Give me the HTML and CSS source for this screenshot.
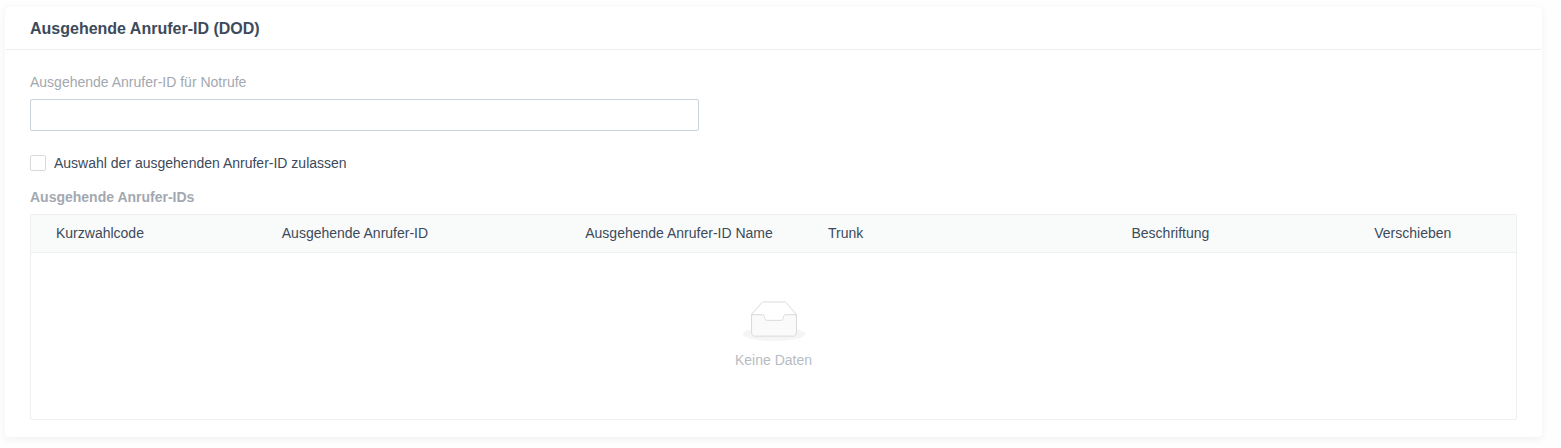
FILE: index.html
```html
<!DOCTYPE html>
<html lang="de">
<head>
    <meta charset="UTF-8">
    <meta name="viewport" content="width=device-width, initial-scale=1.0">
    <title>Ausgehende Anrufer-ID (DOD)</title>
    <link rel="stylesheet" href="styles.css">
</head>
<body>
    <section class="card">
        <h2 class="card-title">Ausgehende Anrufer-ID (DOD)</h2>

        <form class="card-body">
            <label class="field-label" for="emergency-id">Ausgehende Anrufer-ID für Notrufe</label>
            <input class="field-input" type="text" id="emergency-id">

            <div class="check-row">
                <input class="checkbox" type="checkbox" id="allow-select">
                <label for="allow-select">Auswahl der ausgehenden Anrufer-ID zulassen</label>
            </div>

            <h3 class="table-title">Ausgehende Anrufer-IDs</h3>

            <div class="table-wrap">
                <table class="id-table">
                    <colgroup>
                        <col class="col-m">
                        <col class="col-l">
                        <col class="col-m">
                        <col class="col-l">
                        <col class="col-m">
                        <col class="col-s">
                    </colgroup>
                    <thead>
                        <tr>
                            <th>Kurzwahlcode</th>
                            <th>Ausgehende Anrufer-ID</th>
                            <th>Ausgehende Anrufer-ID Name</th>
                            <th>Trunk</th>
                            <th>Beschriftung</th>
                            <th>Verschieben</th>
                        </tr>
                    </thead>
                    <tbody>
                        <tr>
                            <td class="empty" colspan="6">
                                <svg class="empty-icon" width="64" height="40" viewBox="0 0 64 41" aria-hidden="true">
                                    <g transform="translate(0 1)" fill="none" fill-rule="evenodd">
                                        <ellipse fill="#f5f5f5" cx="32" cy="33" rx="32" ry="7"/>
                                        <g fill-rule="nonzero" stroke="#d9d9d9">
                                            <path d="M55 12.76L44.854 1.258C44.367.474 43.656 0 42.907 0H21.093c-.749 0-1.46.474-1.947 1.257L9 12.761V22h46v-9.24z"/>
                                            <path d="M41.613 15.931c0-1.605.994-2.93 2.227-2.931H55v18.137C55 33.26 53.68 35 52.05 35h-40.1C10.32 35 9 33.259 9 31.137V13h11.16c1.233 0 2.227 1.323 2.227 2.928v.022c0 1.605 1.005 2.901 2.237 2.901h14.752c1.232 0 2.237-1.308 2.237-2.913v-.007z" fill="#fafafa"/>
                                        </g>
                                    </g>
                                </svg>
                                <p class="empty-text">Keine Daten</p>
                            </td>
                        </tr>
                    </tbody>
                </table>
            </div>
        </form>
    </section>
</body>
</html>
```
FILE: styles.css
```css
* {
    box-sizing: border-box;
}

body {
    margin: 0;
    padding: 7px 19px 11px 5px;
    background-color: #fefefe;
    color: #3c4a5b;
    font-family: "Liberation Sans", Arial, sans-serif;
    font-size: 14px;
    line-height: 22px;
}

.card {
    background-color: white;
    border: 1px solid #fff;
    border-radius: 4px;
    box-shadow: 0 2px 8px rgba(0, 0, 0, 0.06);
}

.card-title {
    margin: 0;
    padding: 9px 24px 8px;
    border-bottom: 1px solid #eceeef;
    font-size: 16px;
    font-weight: bold;
    line-height: 24px;
}

.card-body {
    padding: 21px 24px 16px;
}

.field-label {
    display: block;
    margin-bottom: 6px;
    color: #a3a8b0;
}

.field-input {
    display: block;
    width: 45%;
    height: 32px;
    padding: 4px 11px;
    border: 1px solid #c8d3db;
    border-radius: 2px;
    background-color: white;
    color: inherit;
    font: inherit;
}

.check-row {
    display: flex;
    align-items: center;
    gap: 8px;
    margin-top: 21px;
}

.checkbox {
    appearance: none;
    width: 16px;
    height: 16px;
    margin: 0;
    border: 1px solid #d9d9d9;
    border-radius: 2px;
    background-color: white;
}

.checkbox:checked {
    background-color: #3c4a5b;
}

.table-title {
    margin: 12px 0 6px;
    color: #a3a8b0;
    font-size: 14px;
    font-weight: bold;
}

.table-wrap {
    border: 1px solid #edeff0;
    border-radius: 2px;
}

.id-table {
    width: 100%;
    table-layout: fixed;
    border-collapse: separate;
    border-spacing: 0;
}

/* columns grow in proportion to these widths */
.col-s {
    width: 148px;
}

.col-m {
    width: 240px;
}

.col-l {
    width: 300px;
}

.id-table th {
    padding: 7px 8px 8px;
    border-bottom: 1px solid #edeff0;
    background-color: #f9fbfa;
    font-weight: normal;
    text-align: left;
    white-space: nowrap;
}

.id-table th:first-child {
    padding-left: 25px;
}

.id-table .empty {
    padding: 48px 16px;
    text-align: center;
}

.empty-icon {
    display: block;
    margin: 0 auto 8px;
}

.empty-text {
    margin: 0;
    color: #b8bcc2;
}
```
